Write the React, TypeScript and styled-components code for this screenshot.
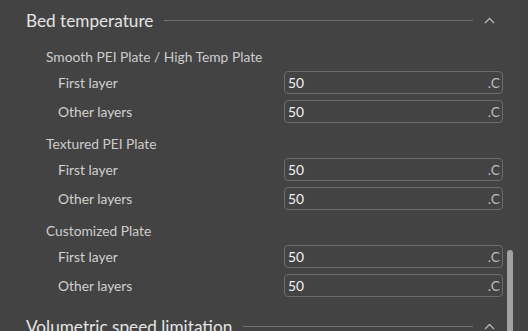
import React from "react";
import styled, { createGlobalStyle } from "styled-components";

const Global = createGlobalStyle`
  html, body { margin: 0; padding: 0; background: #434343; }
  body { font-family: "Lato", "Noto Sans", sans-serif; overflow: hidden; }
`;

const Page = styled.div`
  position: relative;
  width: 528px;
  height: 331px;
  overflow: hidden;
  background: #434343;
  padding: 8px 0 0 26px;
  box-sizing: border-box;
`;

const Header = styled.div<{ $top?: number }>`
  display: flex;
  align-items: center;
  height: 24px;
  margin-top: ${(p) => p.$top ?? 0}px;
  margin-right: 33px;
  gap: 11px;
`;

const HeaderTitle = styled.div`
  font-size: 17.2px;
  color: #e4e4e4;
  white-space: nowrap;
`;

const Rule = styled.div`
  flex: 1;
  height: 1px;
  background: #717171;
`;

const Chevron = () => (
  <svg width="11" height="7" viewBox="0 0 11 7">
    <path d="M1 6 L5.5 1.5 L10 6" fill="none" stroke="#b8b8b8" strokeWidth="1.3" />
  </svg>
);

const Group = styled.div<{ $top: number }>`
  margin-top: ${(p) => p.$top}px;
  display: flex;
  flex-direction: column;
`;

const SubTitle = styled.div`
  padding-left: 20px;
  height: 20px;
  line-height: 20px;
  font-size: 13.8px;
  color: #cdcdcd;
  margin-bottom: 4px;
`;

const Rows = styled.div`
  display: flex;
  flex-direction: column;
  gap: 6px;
`;

const Row = styled.div`
  display: flex;
  align-items: center;
  height: 23px;
  padding-left: 32px;
`;

const Label = styled.div`
  width: 226px;
  flex-shrink: 0;
  font-size: 13.8px;
  color: #d2d2d2;
`;

const Field = styled.div`
  width: 219px;
  flex-shrink: 0;
  height: 23px;
  box-sizing: border-box;
  border: 1px solid #6c6c6c;
  border-radius: 4px;
  display: flex;
  align-items: center;
  justify-content: space-between;
  padding: 0 2px 0 3px;
  font-size: 13.8px;
`;

const Value = styled.span`
  color: #f2f2f2;
`;

const Unit = styled.span`
  color: #bcbcbc;
`;

const Scrollbar = styled.div`
  position: absolute;
  left: 507px;
  top: 250px;
  width: 6px;
  height: 100px;
  border-radius: 3px;
  background: #a2a2a2;
`;

const groups = [
  "Smooth PEI Plate / High Temp Plate",
  "Textured PEI Plate",
  "Customized Plate",
];

export default function App() {
  return (
    <>
      <Global />
      <Page>
        <Header>
          <HeaderTitle>Bed temperature</HeaderTitle>
          <Rule />
          <Chevron />
        </Header>
        {groups.map((g, i) => (
          <Group key={g} $top={i === 0 ? 15 : 11}>
            <SubTitle>{g}</SubTitle>
            <Rows>
              {["First layer", "Other layers"].map((l) => (
                <Row key={l}>
                  <Label>{l}</Label>
                  <Field>
                    <Value>50</Value>
                    <Unit>.C</Unit>
                  </Field>
                </Row>
              ))}
            </Rows>
          </Group>
        ))}
        <Header $top={17}>
          <HeaderTitle>Volumetric speed limitation</HeaderTitle>
          <Rule />
          <Chevron />
        </Header>
        <Scrollbar />
      </Page>
    </>
  );
}
